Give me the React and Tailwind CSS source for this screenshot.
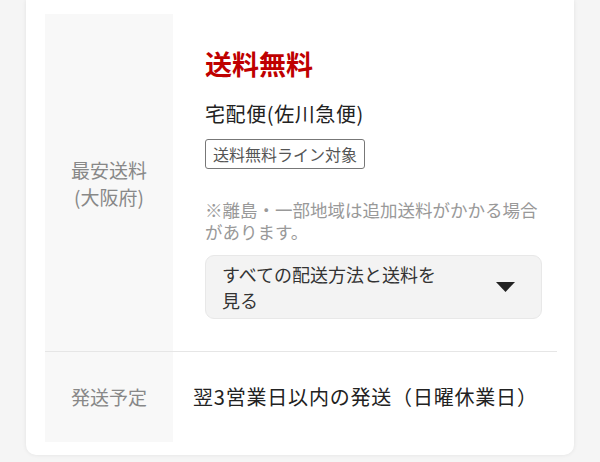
import React from 'react';

const FONT = { fontFamily: '"Noto Sans CJK JP", "Noto Sans", sans-serif' };

export default function App() {
  return (
    <div className="min-h-[462px] bg-[#f5f5f5] px-[26px] pb-[7px] antialiased" style={FONT}>
      <div className="bg-white rounded-b-[10px] shadow-[0_0_4px_rgba(0,0,0,0.08)] pt-[14px] pb-[13px] pl-[19px] pr-[17px]">
        <table className="w-full border-collapse">
          <tbody>
            <tr className="border-b border-[#e6e6e6]">
              <th className="w-[128px] bg-[#f8f8f8] font-normal text-[19px] leading-[27px] text-[#888] text-center align-middle">
                最安送料
                <br />
                (大阪府)
              </th>
              <td className="pl-[32px] pr-[15px] pt-[32px] pb-[32px] align-top">
                <div className="text-[27px] leading-[36px] font-bold text-[#bf0000]">送料無料</div>
                <div className="mt-[18px] text-[20px] leading-[28px] tracking-[0.6px] text-[#222]">宅配便(佐川急便)</div>
                <div className="mt-[11px]">
                  <span className="inline-block border border-[#777] rounded-[3px] px-[7px] h-[30px] leading-[28px] text-[16px] text-[#555]">
                    送料無料ライン対象
                  </span>
                </div>
                <p className="mt-[30px] text-[17.5px] leading-[22px] text-[#999]">
                  ※離島・一部地域は追加送料がかかる場合があります。
                </p>
                <button className="mt-[12px] w-full h-[64px] flex items-center justify-between rounded-[9px] border border-[#e8e8e8] bg-[#f3f3f3] pl-[16px] pr-[26px] text-left">
                  <span className="w-[226px] text-[18px] leading-[26px] text-[#333]">
                    すべての配送方法と送料を見る
                  </span>
                  <svg width="19" height="10" viewBox="0 0 19 10">
                    <path d="M0 0 L19 0 L9.5 10 Z" fill="#222" />
                  </svg>
                </button>
              </td>
            </tr>
            <tr>
              <th className="h-[90px] bg-[#f8f8f8] font-normal text-[19px] text-[#888] text-center align-middle">
                発送予定
              </th>
              <td className="pl-[20px] text-[20px] tracking-[0.8px] text-[#222] align-middle whitespace-nowrap">
                翌3営業日以内の発送（日曜休業日）
              </td>
            </tr>
          </tbody>
        </table>
      </div>
    </div>
  );
}
